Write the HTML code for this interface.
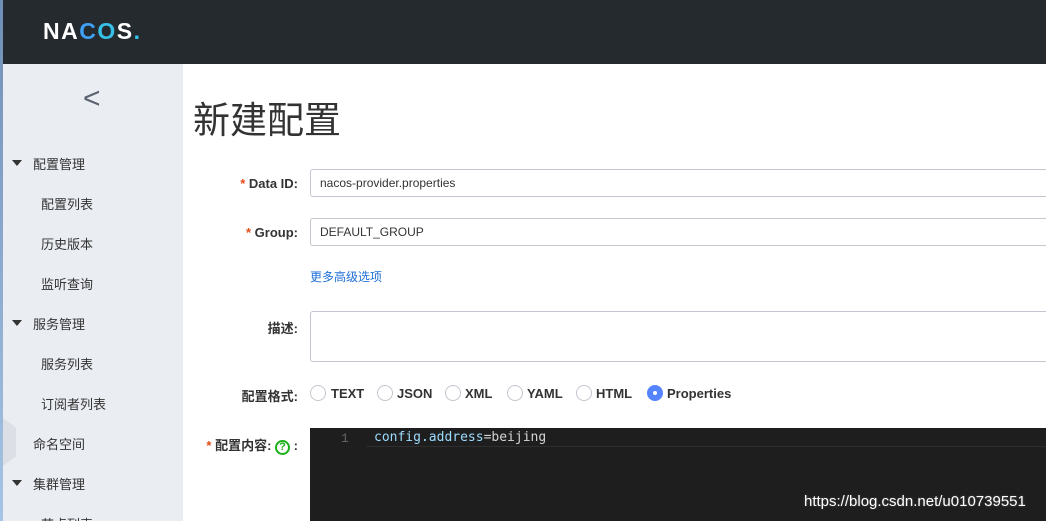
<!DOCTYPE html>
<html style="overflow:hidden;height:521px"><head><meta charset="utf-8"><style>
*{margin:0;padding:0;box-sizing:border-box}
body{width:1046px;height:521px;overflow:hidden;background:#fff;font-family:"Liberation Sans","Noto Sans CJK SC",sans-serif;position:relative}
.strip{position:absolute;left:0;top:0;width:3px;height:521px;background:linear-gradient(#6f8fb8,#a8c4e4)}
.hdr{position:absolute;left:3px;top:0;right:0;height:64px;background:#252a2f}
.logo{position:absolute;left:40px;top:18px;font-size:23px;font-weight:bold;color:#fff;letter-spacing:1.5px}
.side{position:absolute;left:3px;top:64px;width:180px;height:457px;background:#eaedf1;overflow:hidden}
.side div{position:absolute;font-size:13px;color:#333}
.tri{position:absolute;width:0;height:0;border-left:5px solid transparent;border-right:5px solid transparent;border-top:6px solid #333}
.tab{position:absolute;left:3px;top:418px;width:13px;height:48px;background:#dcdfe5;clip-path:polygon(0 0,100% 20%,100% 80%,0 100%)}
.t{position:absolute;left:193px;top:90px;font-size:37px;color:#333}
.lbl{position:absolute;font-size:13px;color:#333;text-align:right;width:120px;left:178px;font-weight:bold}
.star{color:#e64a19}
.inp{position:absolute;left:310px;width:740px;border:1px solid #c4c6cf;border-radius:3px;font-size:12px;color:#333;padding-left:9px}
.radio{position:absolute;top:385px;width:16px;height:16px;border:1px solid #c4c6cf;border-radius:50%;background:#fff}
.rt{position:absolute;top:386px;font-size:13px;font-weight:bold;color:#333}
.ed{position:absolute;left:310px;top:428px;width:740px;height:93px;background:#1e1e1e}
.wm{position:absolute;left:804px;top:493px;font-size:15px;color:#fff;text-shadow:0 0 2px #555}
</style></head><body>
<div class="strip"></div>
<div class="hdr"><div class="logo">NA<span style="color:#3fa0f5">C</span><span style="color:#36c0e8">O</span>S<span style="color:#31c5f0">.</span></div></div>
<div class="side">
<div style="left:80px;top:18px;font-size:30px;color:#5a6270;font-weight:300">&lt;</div>
<div style="left:30px;top:90px">配置管理</div>
<div style="left:38px;top:130px">配置列表</div>
<div style="left:38px;top:170px">历史版本</div>
<div style="left:38px;top:210px">监听查询</div>
<div style="left:30px;top:250px">服务管理</div>
<div style="left:38px;top:290px">服务列表</div>
<div style="left:38px;top:330px">订阅者列表</div>
<div style="left:30px;top:370px">命名空间</div>
<div style="left:30px;top:410px">集群管理</div>
<div style="left:38px;top:450px">节点列表</div>
</div>
<div class="tab"></div>
<div class="tri" style="left:12px;top:160px"></div>
<div class="tri" style="left:12px;top:320px"></div>
<div class="tri" style="left:12px;top:480px"></div>
<div class="t">新建配置</div>
<div class="lbl" style="top:176px"><span class="star">* </span>Data ID:</div>
<div class="inp" style="top:169px;height:28px;line-height:26px">nacos-provider.properties</div>
<div class="lbl" style="top:225px"><span class="star">* </span>Group:</div>
<div class="inp" style="top:218px;height:28px;line-height:26px">DEFAULT_GROUP</div>
<div style="position:absolute;left:310px;top:268px;font-size:12px;color:#1f6fd6">更多高级选项</div>
<div class="lbl" style="top:318px">描述:</div>
<div class="inp" style="top:311px;height:51px"></div>
<div class="lbl" style="top:386px">配置格式:</div>
<div class="radio" style="left:310px"></div><div class="rt" style="left:331px">TEXT</div>
<div class="radio" style="left:377px"></div><div class="rt" style="left:397px">JSON</div>
<div class="radio" style="left:445px"></div><div class="rt" style="left:465px">XML</div>
<div class="radio" style="left:507px"></div><div class="rt" style="left:527px">YAML</div>
<div class="radio" style="left:576px"></div><div class="rt" style="left:596px">HTML</div>
<div class="radio" style="left:647px;background:#5584ff;border-color:#5584ff"><div style="position:absolute;left:5px;top:5px;width:4px;height:4px;border-radius:50%;background:#fff"></div></div><div class="rt" style="left:667px">Properties</div>
<div class="lbl" style="top:435px;width:105px;left:193px"><span class="star">* </span>配置内容: <span style="display:inline-block;width:15px;height:15px;border:2px solid #1ab11a;border-radius:50%;color:#1ab11a;font-size:11px;line-height:11px;text-align:center;font-weight:bold">?</span> :</div>
<div class="ed">
<div style="position:absolute;left:31px;top:3px;font-family:'Liberation Mono',monospace;font-size:13px;color:#666">1</div>
<div style="position:absolute;left:56px;top:0;right:0;height:19px;border-bottom:1px solid #2e2e2e"></div>
<div style="position:absolute;left:64px;top:2px;font-family:'DejaVu Sans Mono',monospace;font-size:13px;color:#d4d4d4"><span style="color:#9cdcfe">config.address</span>=beijing</div>
</div>
<div class="wm">https://blog.csdn.net/u010739551</div>
</body></html>
